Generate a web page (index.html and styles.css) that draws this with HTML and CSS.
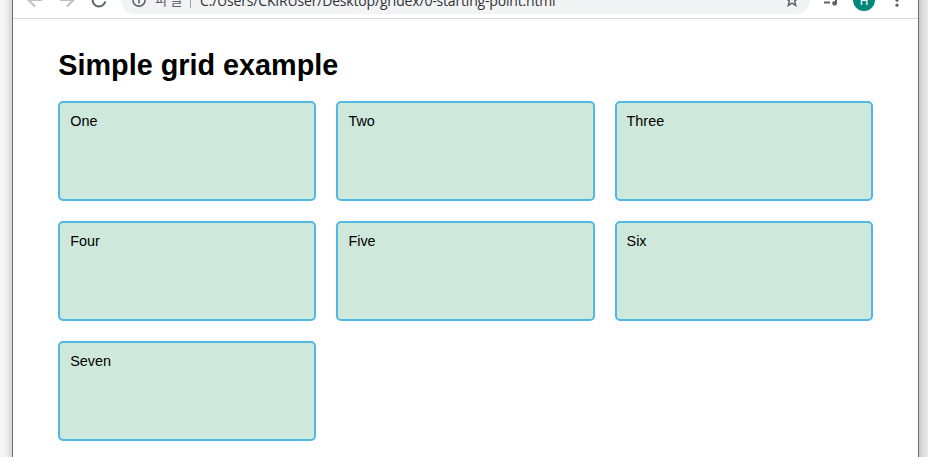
FILE: index.html
```
<!DOCTYPE html>
<html lang="en">
<head>
<meta charset="utf-8">
<title>Simple grid example</title>
<link rel="stylesheet" href="styles.css">
</head>
<body>
<div class="window">
  <header class="viewport-edge">
    <div class="toolbar">
      <svg class="icon back" width="16" height="16" viewBox="0 0 16 16"><path d="M15 8H2M8 1.5L1.5 8L8 14.5"/></svg>
      <svg class="icon forward" width="16" height="16" viewBox="0 0 16 16"><path d="M1 8H14M8 1.5L14.5 8L8 14.5"/></svg>
      <svg class="icon reload" width="16" height="16" viewBox="0 0 16 16"><path d="M14.2 9.3A6.3 6.3 0 0 1 1.7 8A6.3 6.3 0 0 1 12.5 3.5M13.5 0V5H8.5"/></svg>
      <div class="address">
        <svg class="icon info" width="14" height="14" viewBox="0 0 14 14"><circle cx="7" cy="7" r="6.1"/><path d="M7 6.2V10.4M7 3.4V5"/></svg>
        <span class="scheme" lang="ko">파일</span>
        <span class="divider"></span>
        <span class="url">C:/Users/CKIRUser/Desktop/gridex/0-starting-point.html</span>
        <svg class="icon star" width="14" height="14" viewBox="0 0 14 14"><path d="M7 1.2L8.6 5.1L12.9 5.4L9.6 8.1L10.7 12.4L7 10.1L3.3 12.4L4.4 8.1L1.1 5.4L5.4 5.1Z"/></svg>
      </div>
      <svg class="icon media" width="16" height="16" viewBox="0 0 16 16"><path d="M1 2.5H9M1 6.5H9M1 10.5H7M13 11.5V2.5H16"/><circle class="note" cx="11.6" cy="11.3" r="2.4"/></svg>
      <span class="avatar">H</span>
      <svg class="menu" width="4" height="16" viewBox="0 0 4 16"><circle cx="2" cy="3.2" r="1.6"/><circle cx="2" cy="8.2" r="1.6"/><circle cx="2" cy="13.2" r="1.6"/></svg>
    </div>
  </header>
  <main class="page">
    <h1>Simple grid example</h1>
    <div class="container">
      <div>One</div>
      <div>Two</div>
      <div>Three</div>
      <div>Four</div>
      <div>Five</div>
      <div>Six</div>
      <div>Seven</div>
    </div>
  </main>
</div>
</body>
</html>
```
FILE: styles.css
```
* { box-sizing: border-box; }

body {
  margin: 0;
  height: 457px;
  overflow: hidden;
  padding: 0 9px 0 12px;
  background: linear-gradient(to right, #f6f6f6 0, #f3f3f3 5px, #d8d8d8 12px, #d8d8d8 50%, #cacaca 919px, #e2e2e2 925px, #e8e8e8 928px);
  font: 14.4px/1.2 "Liberation Sans", Arial, sans-serif;
  color: #000;
}

.window {
  height: 457px;
  background: #fff;
  border: solid #6c6c6c;
  border-width: 0 1px;
}

.viewport-edge {
  height: 19px;
  overflow: hidden;
  border-bottom: 1px solid #d9dadb;
}

.toolbar {
  display: flex;
  align-items: center;
  height: 36px;
  margin-top: -18px;
  padding-left: 14px;
}

.icon {
  flex: none;
  fill: none;
  stroke: #5f6368;
  stroke-width: 2;
}

.back, .forward { stroke: #bdbfc1; }
.forward { margin-left: 16px; }
.reload { margin-left: 16px; }

.address {
  display: flex;
  align-items: center;
  width: 689px;
  height: 28px;
  margin-left: 14px;
  padding: 0 11px;
  border-radius: 14px;
  background: #f1f3f4;
  font: 14px/20px "Open Sans", "Noto Sans CJK KR", sans-serif;
  white-space: nowrap;
}

.info { stroke-width: 1.6; }

.scheme {
  width: 29px;
  margin-left: 9px;
  padding-bottom: 3px;
  color: #5f6368;
  font-family: "Noto Sans CJK KR", sans-serif;
  letter-spacing: 1.5px;
}

.divider {
  width: 1px;
  height: 16px;
  margin-left: 6px;
  background: #9fa3a7;
}

.url {
  width: 358px;
  margin-left: 9px;
  padding-top: 2px;
  color: #303236;
  letter-spacing: -0.18px;
}

.star {
  margin-left: auto;
  stroke-width: 1.5;
}

.media { margin-left: 13px; }
.note { fill: #5f6368; stroke: none; }

.avatar {
  width: 22px;
  height: 22px;
  margin-left: 14px;
  border-radius: 50%;
  background: #00897b;
  color: #fff;
  font: 12px/24px Roboto, sans-serif;
  text-align: center;
}

.menu {
  margin-left: 20px;
  fill: #5f6368;
}

.page {
  width: 90%;
  margin: 0 auto;
  padding-top: 29px;
}

h1 {
  margin: 0 0 18px;
  font-size: 28.8px;
  line-height: 35px;
}

.container {
  display: grid;
  grid-template-columns: repeat(3, 1fr);
  grid-auto-rows: 100px;
  gap: 20px;
}

.container > div {
  padding: 10px;
  border: 2px solid rgb(79, 185, 227);
  border-radius: 5px;
  background: rgb(207, 232, 220);
}
```
